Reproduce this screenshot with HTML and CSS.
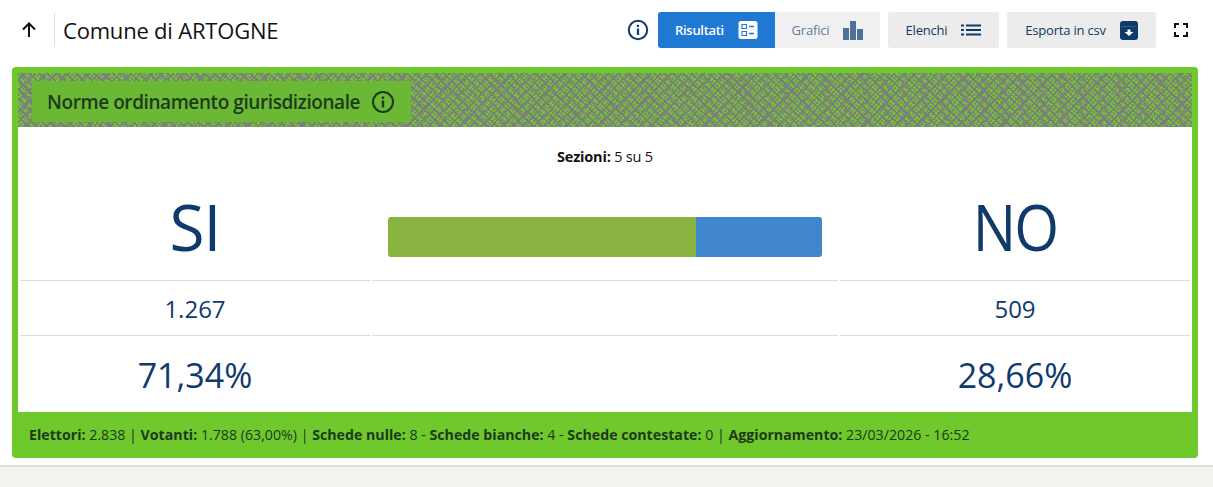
FILE: index.html
```html
<!DOCTYPE html>
<html lang="it">
<head>
    <meta charset="UTF-8">
    <meta name="viewport" content="width=device-width, initial-scale=1.0">
    <title>Comune di ARTOGNE</title>
    <link rel="stylesheet" href="styles.css">
</head>
<body>
    <header class="topbar">
        <div class="back">
            <svg width="18" height="18" viewBox="0 0 18 18"><path d="M9 16V3M3 8.5L9 2.5l6 6" fill="none" stroke="#111" stroke-width="2"/></svg>
        </div>
        <h1 class="titolo">Comune di ARTOGNE</h1>
        <svg class="info-top" width="22" height="22" viewBox="0 0 22 22"><circle cx="11" cy="11" r="9.2" fill="none" stroke="#0f3b6b" stroke-width="2"/><rect x="9.9" y="9.5" width="2.2" height="6.5" fill="#0f3b6b"/><rect x="9.9" y="5.8" width="2.2" height="2.2" fill="#0f3b6b"/></svg>
        <div class="switch">
            <div class="btn btn-attivo">Risultati
                <svg width="20" height="18" viewBox="0 0 20 18"><rect x="0.5" y="0" width="19" height="18" rx="2.5" fill="#fff"/><path d="M4 3.5h4.5v4H4zM4 10.5h4.5v4H4z" fill="none" stroke="#1f78d1" stroke-width="1.1"/><path d="M11 5.5h5M11 12.5h5" stroke="#1f78d1" stroke-width="1.4"/></svg>
            </div>
            <div class="btn btn-spento">Grafici
                <svg width="20" height="19" viewBox="0 0 20 19"><path d="M0 7h6v12H0zM7 0h6v19H7zM14 8h6v11h-6z" fill="#4f7196"/></svg>
            </div>
        </div>
        <div class="btn btn-grigio btn-elenchi">Elenchi
            <svg width="20" height="14" viewBox="0 0 20 14"><path d="M5 2.5h15M5 7h15M5 11.5h15" stroke="#0f3b6b" stroke-width="2"/><path d="M0 2.5h3M0 7h3M0 11.5h3" stroke="#0f3b6b" stroke-width="2"/></svg>
        </div>
        <div class="btn btn-grigio btn-csv">Esporta in csv
            <svg width="18" height="19" viewBox="0 0 18 19"><rect x="0" y="0" width="18" height="19" rx="3" fill="#0f3b6b"/><path d="M1 5.5h16" stroke="#3d6288" stroke-width="0.8"/><path d="M7.5 8.5h3v2.5h3L9 15l-4.5-4h3z" fill="#fff"/></svg>
        </div>
        <svg class="fullscreen" width="14" height="14" viewBox="0 0 14 14"><path d="M1 5V1h4M9 1h4v4M13 9v4H9M5 13H1V9" fill="none" stroke="#111" stroke-width="2"/></svg>
    </header>

    <main class="card">
        <div class="card-head">
            <div class="etichetta">Norme ordinamento giurisdizionale
                <svg width="24" height="24" viewBox="0 0 24 24"><circle cx="12" cy="12" r="10" fill="none" stroke="#1d3a1d" stroke-width="2"/><rect x="10.8" y="10.5" width="2.4" height="7" fill="#1d3a1d"/><rect x="10.8" y="6.5" width="2.4" height="2.4" fill="#1d3a1d"/></svg>
            </div>
        </div>
        <div class="card-body">
            <p class="sezioni"><b>Sezioni:</b> 5 su 5</p>
            <div class="griglia">
                <div class="cella nome">SI</div>
                <div class="cella-barra">
                    <div class="barra">
                        <div class="barra-si" style="width: 71%"></div>
                        <div class="barra-no"></div>
                    </div>
                </div>
                <div class="cella nome nome-no">NO</div>

                <div class="cella voti">1.267</div>
                <div class="cella voti"></div>
                <div class="cella voti">509</div>

                <div class="cella perc">71,34%</div>
                <div class="cella perc"></div>
                <div class="cella perc">28,66%</div>
            </div>
        </div>
        <div class="card-foot">
            <b>Elettori:</b> 2.838 | <b>Votanti:</b> 1.788 (63,00%) | <b>Schede nulle:</b> 8 - <b>Schede bianche:</b> 4 - <b>Schede contestate:</b> 0 | <b>Aggiornamento:</b> 23/03/2026 - 16:52
        </div>
    </main>

    <div class="page-foot"></div>
</body>
</html>
```

FILE: styles.css
```css
html, body {
    height: 100%;
}

body {
    margin: 0;
    background-color: #fff;
    color: #111;
    font-family: "Open Sans", "Noto Sans", sans-serif;
    overflow: hidden;
}

.topbar {
    display: flex;
    align-items: center;
    height: 60px;
    padding: 0 25px 0 20px;
    box-sizing: border-box;
}

.back {
    display: flex;
    align-items: center;
    height: 34px;
    padding-right: 16px;
    border-right: 1px solid #ddd;
}

.titolo {
    flex: 1;
    margin: 0 0 0 8px;
    font-size: 22px;
    font-weight: 400;
    letter-spacing: -0.2px;
}

.info-top {
    margin-right: 9px;
}

.switch {
    display: flex;
    margin-right: 8px;
}

.btn {
    display: flex;
    align-items: center;
    justify-content: center;
    gap: 14px;
    height: 36px;
    box-sizing: border-box;
    font-size: 13px;
    letter-spacing: -0.2px;
    border-radius: 3px;
}

.btn-attivo {
    width: 117px;
    background-color: #1f78d1;
    color: #fff;
    font-weight: 600;
    letter-spacing: -0.3px;
    border-radius: 3px 0 0 3px;
}

.btn-spento {
    width: 105px;
    background-color: #f0f0f0;
    color: #5f7d9c;
    border-radius: 0 3px 3px 0;
}

.btn-grigio {
    margin-right: 8px;
    background-color: #ececec;
    color: #12395f;
}

.btn-elenchi {
    width: 111px;
}

.btn-csv {
    width: 149px;
}

.fullscreen {
    margin-left: 10px;
}

.card {
    display: flex;
    flex-direction: column;
    height: 391px;
    margin: 7px 15px 0 12px;
    border-radius: 4px;
    background-color: #6fc82c;
}

.card-head {
    height: 54px;
    margin: 6px 6px 0;
    padding: 8px 14px 5px;
    box-sizing: border-box;
    background-color: #6fc82c;
    background-image:
        repeating-linear-gradient(45deg, #7d7d80 0 1.6px, transparent 1.6px 6.5px),
        repeating-linear-gradient(-45deg, #7d7d80 0 1.6px, transparent 1.6px 7.5px),
        repeating-linear-gradient(38deg, rgba(125, 125, 128, 0.75) 0 1px, transparent 1px 3.7px),
        repeating-linear-gradient(-52deg, rgba(125, 125, 128, 0.75) 0 1px, transparent 1px 3.3px);
}

.etichetta {
    display: inline-flex;
    align-items: center;
    gap: 11px;
    height: 41px;
    padding: 0 16px 0 15px;
    background-color: #6ab833;
    color: #1d3a1d;
    font-size: 19px;
    font-weight: 600;
    letter-spacing: -0.42px;
}

.card-body {
    height: 285px;
    margin: 0 6px;
    background-color: #fff;
}

.sezioni {
    margin: 0;
    padding-top: 21px;
    height: 18px;
    text-align: center;
    font-size: 14.5px;
    line-height: 18px;
    letter-spacing: -0.2px;
}

.griglia {
    display: grid;
    grid-template-columns: 350px 466px 350px;
    grid-template-rows: 114px 55px 77px;
    column-gap: 2px;
    padding: 0 2px;
}

.cella {
    display: flex;
    align-items: center;
    justify-content: center;
    color: #0f3b6b;
}

.nome {
    padding-top: 6px;
    font-size: 64px;
    letter-spacing: -1px;
}

.nome-no {
    letter-spacing: -2px;
    transform: scaleX(0.9);
}

.cella-barra {
    padding: 51px 16px 0;
}

.barra {
    display: flex;
    height: 40px;
    border-radius: 3px;
    overflow: hidden;
}

.barra-si {
    background-color: #8ab441;
}

.barra-no {
    flex: 1;
    background-color: #3f86cc;
}

.voti {
    border-top: 1px solid #ddd;
    font-size: 24px;
}

.perc {
    padding-top: 2px;
    border-top: 1px solid #ddd;
    font-size: 34px;
}

.card-foot {
    flex: 1;
    padding: 0 17px;
    color: #1d3a1d;
    font-size: 14.2px;
    line-height: 46px;
}

.page-foot {
    height: 40px;
    margin-top: 7px;
    background-color: #f3f3ee;
    border-top: 2px solid #ddd;
}
```
